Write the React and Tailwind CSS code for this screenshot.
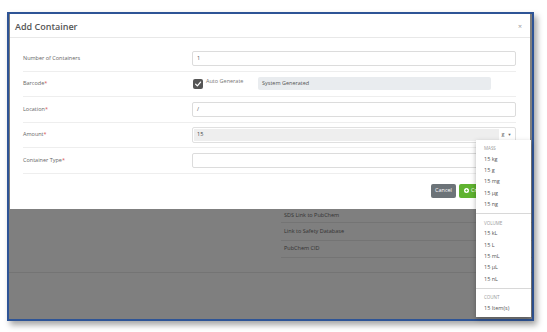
const font = { fontFamily: '"Open Sans", "Noto Sans", sans-serif' }

const groups = [
  { title: 'Mass', items: ['15 kg', '15 g', '15 mg', '15 µg', '15 ng'] },
  { title: 'Volume', items: ['15 kL', '15 L', '15 mL', '15 µL', '15 nL'] },
  { title: 'Count', items: ['15 Item(s)'] },
]

function Label({ text, required }) {
  return (
    <div className="w-[169px] shrink-0 text-[5.5px] leading-none text-[#666]">
      {text}
      {required && <span className="text-[#d9534f]">*</span>}
    </div>
  )
}

function Row({ children }) {
  return <div className="flex h-[25.5px] items-center border-b border-[#eeeeee]">{children}</div>
}

export default function App() {
  return (
    <div className="h-[332px] w-[547px] overflow-hidden bg-white pl-[7px] pt-[12px]" style={font}>
      <div className="relative h-[309px] w-[527px] border-2 border-[#2e5496] bg-[#7f7f7f] shadow-[3px_4px_6px_rgba(0,0,0,0.35)]">
        {/* Modal */}
        <div className="ml-[1px] flex h-[195px] w-[520px] flex-col bg-white">
          <div className="flex h-[24px] items-center justify-between border-b border-[#e8e8e8] pl-[5px] pr-[8px] pt-[2px]">
            <span className="text-[9px] font-semibold leading-none text-[#555]">Add Container</span>
            <span className="text-[7px] leading-none text-[#999]">×</span>
          </div>

          <div className="pl-[13px] pr-[14px] pt-[8px]">
            <Row>
              <Label text="Number of Containers" />
              <div className="flex h-[15px] flex-1 items-center rounded-[2px] border border-[#dcdcdc] pl-[4px] text-[5.5px] leading-none text-[#555]">1</div>
            </Row>
            <Row>
              <Label text="Barcode" required />
              <div className="flex flex-1 items-center">
                <div className="ml-[1px] flex h-[10px] w-[10px] items-center justify-center rounded-[2px] bg-[#555]">
                  <svg viewBox="0 0 10 10" className="h-[8px] w-[8px]">
                    <path d="M2 5.2 L4.2 7.3 L8.2 2.6" fill="none" stroke="white" strokeWidth="1.6" strokeLinecap="round" strokeLinejoin="round" />
                  </svg>
                </div>
                <span className="mb-[5px] ml-[3px] w-[52px] text-[5.5px] leading-none text-[#777]">Auto Generate</span>
                <div className="flex h-[13px] w-[233px] items-center rounded-[2px] bg-[#e9ecef] pl-[4px] text-[5.5px] leading-none text-[#555]">System Generated</div>
              </div>
            </Row>
            <Row>
              <Label text="Location" required />
              <div className="flex h-[15px] flex-1 items-center rounded-[2px] border border-[#dcdcdc] pl-[4px] text-[5.5px] leading-none text-[#555]">/</div>
            </Row>
            <Row>
              <Label text="Amount" required />
              <div className="flex h-[16px] flex-1 items-center rounded-[2px] border border-[#e0e0e0] p-[1px]">
                <div className="flex h-full flex-1 items-center bg-[#eeeeee] pl-[3px] text-[5.5px] leading-none text-[#444]">15</div>
                <div className="flex w-[15px] items-center justify-center gap-[3px] text-[5.5px] leading-none text-[#666]">
                  <span>g</span>
                  <span className="text-[4px]">▼</span>
                </div>
              </div>
            </Row>
            <Row>
              <Label text="Container Type" required />
              <div className="h-[15px] flex-1 rounded-[2px] border border-[#dcdcdc]" />
            </Row>

            <div className="mt-[10px] flex justify-end gap-[3px]">
              <button className="h-[14px] w-[25px] rounded-[2px] bg-[#6c7378] text-[5.5px] leading-none text-white">Cancel</button>
              <button className="flex h-[14px] w-[57px] items-center gap-[2px] rounded-[2px] bg-[#5fb330] pl-[5px] text-[5.5px] leading-none text-white">
                <svg viewBox="0 0 10 10" className="h-[5px] w-[5px]">
                  <circle cx="5" cy="5" r="5" fill="white" />
                  <path d="M5 2.5v5M2.5 5h5" stroke="#5fb330" strokeWidth="1.6" />
                </svg>
                Create
              </button>
            </div>
          </div>
        </div>

        {/* Page behind the overlay */}
        <div className="border-b border-[#747474]">
          <div className="ml-[272px] text-[5.5px] leading-none text-[#333]">
            <div className="flex h-[14px] items-center border-b border-[#747474] pl-[3px]">SDS Link to PubChem</div>
            <div className="flex h-[18px] items-center border-b border-[#747474] pl-[3px]">Link to Safety Database</div>
            <div className="flex h-[17px] items-center border-b border-[#747474] pl-[3px]">PubChem CID</div>
            <div className="h-[14px]" />
          </div>
        </div>

        {/* Unit dropdown */}
        <div className="absolute left-[467px] top-[126px] w-[55px] bg-white shadow-[0_2px_5px_rgba(0,0,0,0.3)]">
          {groups.map((g, gi) => (
            <div key={g.title} className={gi > 0 ? 'border-t border-[#d8d8d8] py-[3px]' : 'py-[3px]'}>
              <div className="flex h-[11px] items-center pl-[8px] text-[4.5px] uppercase leading-none text-[#999]">{g.title}</div>
              {g.items.map((it) => (
                <div key={it} className="flex h-[11.3px] items-center pl-[8px] text-[5.5px] leading-none text-[#555]">{it}</div>
              ))}
            </div>
          ))}
        </div>
      </div>
    </div>
  )
}
